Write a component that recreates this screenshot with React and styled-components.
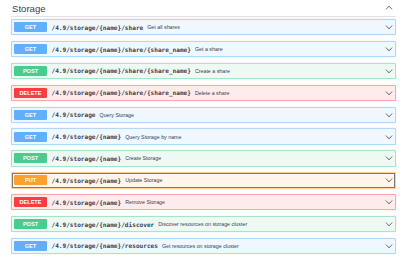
import React from "react";
import styled, { createGlobalStyle } from "styled-components";

const GlobalStyle = createGlobalStyle`
  body {
    margin: 0;
    background: #fff;
    font-family: "Liberation Sans", Arial, sans-serif;
    color: #3b4151;
  }
`;

const colors = {
  GET: { main: "#61affe", bg: "#eff7ff", border: "rgba(97, 175, 254, 0.45)" },
  POST: { main: "#49cc90", bg: "#edfaf4", border: "rgba(73, 204, 144, 0.45)" },
  DELETE: { main: "#f93e3e", bg: "#feecec", border: "rgba(249, 62, 62, 0.4)" },
  PUT: { main: "#fca130", bg: "#fff5ea", border: "rgba(252, 161, 48, 0.45)" },
};

const Section = styled.section`
  padding: 0 4px 0 11px;
`;

const TagHeader = styled.div`
  display: flex;
  align-items: center;
  justify-content: space-between;
  height: 16px;
  padding: 0 3px 0 1px;
  border-bottom: 1px solid rgba(59, 65, 81, 0.15);
  margin-bottom: 2px;
`;

const TagTitle = styled.h4`
  margin: 0;
  font-size: 9.6px;
  font-weight: normal;
  color: #3b4151;
`;

const Block = styled.div`
  background: ${(p) => colors[p.$method].bg};
  border: 1px solid ${(p) => colors[p.$method].border};
  border-radius: 1.6px;
  box-shadow: 0 0 1.2px rgba(0, 0, 0, 0.19);
  margin-bottom: 5.5px;
`;

const Summary = styled.div`
  display: flex;
  align-items: center;
  padding: 2.2px 2px;
  outline: ${(p) => (p.$focused ? "1px solid #7a7a7a" : "none")};
  outline-offset: -1px;
`;

const Badge = styled.span`
  flex: none;
  width: 33px;
  height: 10px;
  line-height: 10px;
  border-radius: 1.2px;
  background: ${(p) => colors[p.$method].main};
  color: #fff;
  font-size: 5.6px;
  font-weight: bold;
  text-align: center;
  text-shadow: 0 0.4px 0 rgba(0, 0, 0, 0.1);
`;

const Path = styled.span`
  padding: 0 4px 0 4.5px;
  font-family: "DejaVu Sans Mono", "Liberation Mono", monospace;
  font-size: 6.1px;
  font-weight: bold;
  color: #3b4151;
  white-space: nowrap;
`;

const Description = styled.span`
  flex: 1;
  font-size: 5.3px;
  color: #3b4151;
  white-space: nowrap;
`;

const Arrow = styled.svg`
  flex: none;
  width: 8px;
  height: 8px;
  margin-right: 0.5px;
  fill: #4a4a4a;
  transform: ${(p) => (p.$up ? "rotate(180deg)" : "none")};
`;

function Chevron({ up }) {
  return (
    <Arrow viewBox="0 0 20 20" $up={up}>
      <path d="M17.418 6.109c.272-.268.709-.268.979 0s.271.701 0 .969l-7.908 7.83c-.27.268-.707.268-.979 0l-7.908-7.83c-.27-.268-.27-.701 0-.969.271-.268.709-.268.979 0L10 13.25l7.418-7.141z" />
    </Arrow>
  );
}

const operations = [
  { method: "GET", path: "/4.9/storage/{name}/share", summary: "Get all shares" },
  { method: "GET", path: "/4.9/storage/{name}/share/{share_name}", summary: "Get a share" },
  { method: "POST", path: "/4.9/storage/{name}/share/{share_name}", summary: "Create a share" },
  { method: "DELETE", path: "/4.9/storage/{name}/share/{share_name}", summary: "Delete a share" },
  { method: "GET", path: "/4.9/storage", summary: "Query Storage" },
  { method: "GET", path: "/4.9/storage/{name}", summary: "Query Storage by name" },
  { method: "POST", path: "/4.9/storage/{name}", summary: "Create Storage" },
  { method: "PUT", path: "/4.9/storage/{name}", summary: "Update Storage", focused: true },
  { method: "DELETE", path: "/4.9/storage/{name}", summary: "Remove Storage" },
  { method: "POST", path: "/4.9/storage/{name}/discover", summary: "Discover resources on storage cluster" },
  { method: "GET", path: "/4.9/storage/{name}/resources", summary: "Get resources on storage cluster" },
];

export default function App() {
  return (
    <>
      <GlobalStyle />
      <Section>
        <TagHeader>
          <TagTitle>Storage</TagTitle>
          <Chevron up />
        </TagHeader>
        {operations.map((op, i) => (
          <Block key={i} $method={op.method}>
            <Summary $focused={op.focused}>
              <Badge $method={op.method}>{op.method}</Badge>
              <Path>{op.path}</Path>
              <Description>{op.summary}</Description>
              <Chevron />
            </Summary>
          </Block>
        ))}
      </Section>
    </>
  );
}
